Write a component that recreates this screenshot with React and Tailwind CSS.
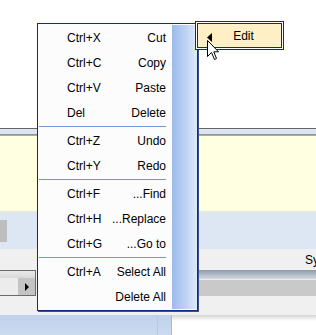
import React from 'react';

const groups = [
    [
        ['Ctrl+X', 'Cut'],
        ['Ctrl+C', 'Copy'],
        ['Ctrl+V', 'Paste'],
        ['Del', 'Delete'],
    ],
    [
        ['Ctrl+Z', 'Undo'],
        ['Ctrl+Y', 'Redo'],
    ],
    [
        ['Ctrl+F', '...Find'],
        ['Ctrl+H', '...Replace'],
        ['Ctrl+G', '...Go to'],
    ],
    [
        ['Ctrl+A', 'Select All'],
        ['', 'Delete All'],
    ],
];

const font = { fontFamily: '"Liberation Sans", Arial, sans-serif' };

const ContextMenu = () => (
    <div className="absolute left-[37px] top-[23px] flex h-[288px] w-[161px] border border-[#0b2b86] bg-[#fcfcfc] py-px shadow-[1px_1px_0_#3a4f8a]">
        <div className="flex flex-1 flex-col">
            {groups.map((group, gi) => (
                <div key={gi}>
                    {gi > 0 && <div className="my-px ml-px mr-[6px] h-px bg-[#7094d4]" />}
                    {group.map(([key, label]) => (
                        <div key={label} className="flex h-[25px] items-center justify-between pl-[29px] pr-[6px] text-[12px] text-black">
                            <span>{key}</span>
                            <span>{label}</span>
                        </div>
                    ))}
                </div>
            ))}
        </div>
        <div className="w-[25px] bg-gradient-to-r from-[#9bbaea] to-[#dde9f9]" />
    </div>
);

const EditItem = () => (
    <div className="absolute left-[195px] top-[21px] h-[29px] w-[89px] border border-[#0b2b86] bg-white p-px">
        <div className="relative flex h-full items-center justify-center border border-[#0b2b86] bg-[#ffefc5] pl-[8px] text-[12px] text-black">
            <svg className="absolute left-[9px] top-[9px]" width="5" height="9" viewBox="0 0 5 9">
                <path d="M5 0 L0 4.5 L5 9 Z" fill="#000" />
            </svg>
            Edit
        </div>
    </div>
);

const Cursor = () => (
    <svg className="absolute left-[207px] top-[40px]" width="13" height="21" viewBox="0 0 13 21">
        <path d="M0.5 0.5 L0.5 16.5 L4.5 12.5 L7.5 19.5 L9.5 18.5 L6.8 11.8 L11.5 11.8 Z" fill="#fff" stroke="#000" strokeWidth="1" strokeLinejoin="miter" />
    </svg>
);

const App = () => {
    return (
        <div className="relative h-[335px] w-[316px] overflow-hidden bg-white" style={font}>
            <div className="flex flex-col">
                <div className="h-[128px] bg-white" />
                <div className="h-px bg-[#666]" />
                <div className="h-[5px] bg-[#dce6f3]" />
                <div className="h-[2px] bg-gradient-to-b from-[#8a8a8a] to-[#b5b5b5]" />
                <div className="h-[75px] bg-[#ffffe1]" />
                <div className="h-[2px] bg-[#e6e6e2]" />
                <div className="flex h-[36px] items-start bg-[#dde7f3] pt-[7px]">
                    <div className="h-[22px] w-[7px] bg-[#bebebe]" />
                </div>
                <div className="h-[21px] overflow-hidden whitespace-nowrap bg-[#f0f0f0] pl-[305px] pt-[5px] text-[12px] leading-none text-black">
                    Sy
                </div>
                <div className="flex h-[26px]">
                    <div className="flex w-[36px] flex-col border-y border-r border-[#6b6b6b]">
                        <div className="h-[7px] bg-gradient-to-b from-[#e9e9e9] to-[#d9d9d9]" />
                        <div className="flex flex-1">
                            <div className="w-[18px] bg-[#ececec]" />
                            <div className="flex flex-1 items-center justify-center bg-[#c4c4c4]">
                                <svg width="4" height="8" viewBox="0 0 4 8">
                                    <path d="M0 0 L4 4 L0 8 Z" fill="#000" />
                                </svg>
                            </div>
                        </div>
                    </div>
                    <div className="flex flex-1 flex-col bg-[#f0f0f0] pl-[161px]">
                        <div className="h-[9px] bg-gradient-to-b from-[#8e9bab] to-[#d2d9e2]" />
                        <div className="h-px bg-[#ececec]" />
                        <div className="flex-1 bg-[#c9c9c9]" />
                    </div>
                </div>
                <div className="h-[19px] bg-[#f0f0f0]" />
                <div className="flex h-[20px]">
                    <div className="flex w-[172px] bg-gradient-to-b from-[#bfd1eb] to-[#cbdaef]">
                        <div className="w-[157px]" />
                        <div className="w-px bg-[#b7c9e3]" />
                        <div className="flex-1" />
                        <div className="w-px bg-[#a9bad3]" />
                    </div>
                    <div className="flex-1 bg-gradient-to-b from-[#d6d6d6] via-white via-30% to-white" />
                </div>
            </div>
            <ContextMenu />
            <EditItem />
            <Cursor />
        </div>
    );
};

export default App;
